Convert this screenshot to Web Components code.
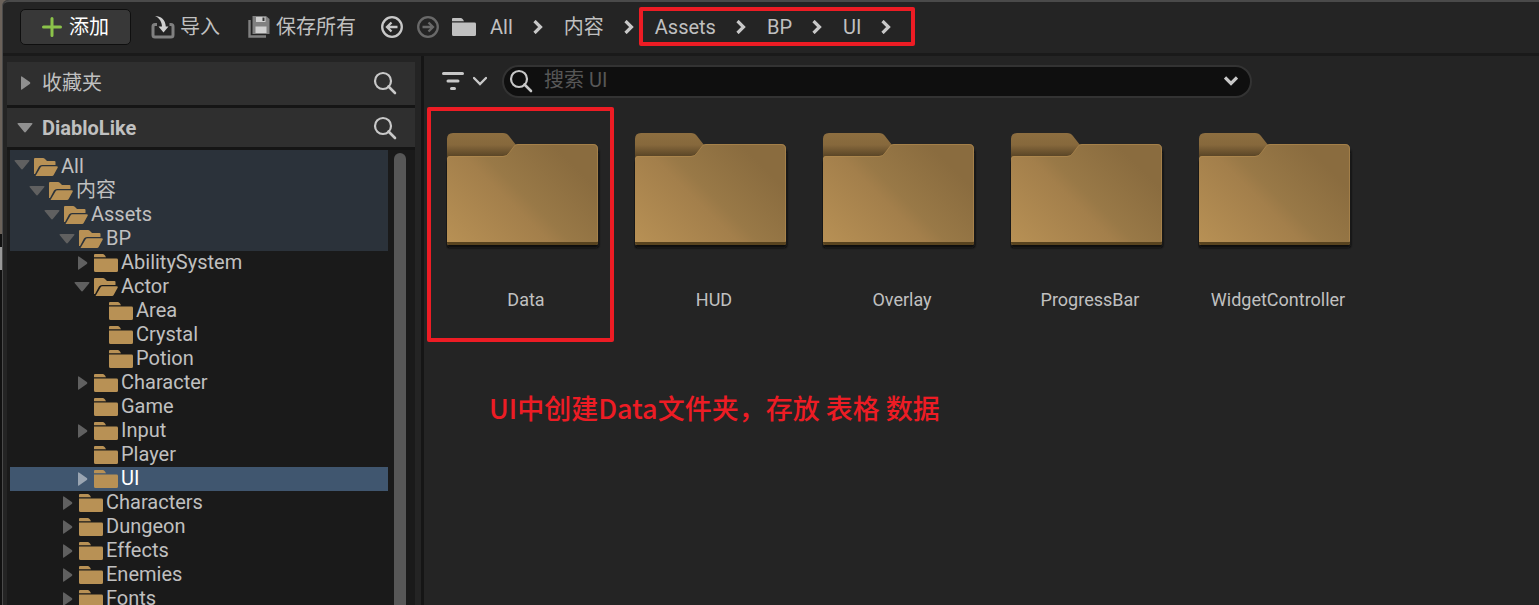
<!DOCTYPE html>
<html lang="zh-CN">
<head>
<meta charset="utf-8">
<title>Content Browser</title>
<style>
  html, body { margin: 0; height: 100%; overflow: hidden; }
  body { background: #242424; color: #c0c0c0; font: 20px/24px Roboto, "Noto Sans CJK SC", sans-serif; }
</style>
</head>
<body>
<content-browser></content-browser>
<script>
const BASE = `<style>
  *, *::before, *::after { box-sizing: border-box; }
  button, a, input { font: inherit; color: inherit; background: none; border: 0; margin: 0; padding: 0; text-decoration: none; }
  button, a { cursor: pointer; }
  svg { display: block; flex: none; }
</style>`;

const ICONS = {
  plus: [20, 20, '<path d="M10 1.5V18.500M1.500 10H18.500" stroke="#8bc34a" stroke-width="3" stroke-linecap="round"/>'],
  import: [24, 24, '<path d="M6 9.500H4Q2 9.500 2 11.500V20Q2 22 4 22H20Q22 22 22 20V11.500Q22 9.500 20 9.500H18.500" fill="none" stroke="#808080" stroke-width="3"/><path d="M4 1C10 1 14.500 5 14.800 11.500H17.500L12.500 17.500L7.500 11.500H11C10.800 7 8.500 3 4 1Z" fill="#d0d0d0"/>'],
  save: [22, 22, '<path d="M1.500 4V20.500H18" fill="none" stroke="#808080" stroke-width="2.400"/><path d="M4.500 0H18L21.500 3V18H4.500Z" fill="#808080"/><path d="M8 1H17.500V6H8ZM7.500 10.500H18.500V17H7.500Z" fill="#d0d0d0"/><path d="M14.500 1.500H16.500V5H14.500Z" fill="#333"/>'],
  back: [22, 22, '<circle cx="11" cy="11" r="9.800" fill="none" stroke="#c8c8c8" stroke-width="2.300"/><path d="M16.500 11H6.500M10.500 6.500L6 11L10.500 15.500" fill="none" stroke="#c8c8c8" stroke-width="2.300"/>'],
  forward: [22, 22, '<circle cx="11" cy="11" r="9.800" fill="none" stroke="#696969" stroke-width="2.300"/><path d="M5.500 11H15.500M11.500 6.500L16 11L11.500 15.500" fill="none" stroke="#696969" stroke-width="2.300"/>'],
  folder: [24, 18, '<path d="M0 3.300V1Q0 0 1 0H9Q10 0 11 1.500L12 3.300ZM0 4.600H22.500Q24 4.600 24 6V16.500Q24 18 22.500 18H1.500Q0 18 0 16.500Z" fill="currentColor"/>'],
  open: [24, 18, '<path d="M0 16V1Q0 0 1 0H9Q10 0 11 1L13 3H20.500Q21.500 3 21.500 4V7H8Q6 7 5 8.500L1 16Z" fill="currentColor"/><path d="M1.500 18L6.500 9.500Q7 8.300 8.500 8.300H22.500Q24.500 8.300 23.500 10L19.800 16.800Q19.200 18 18 18Z" fill="currentColor"/>'],
  next: [10, 14, '<path d="M1.500 1L7.500 7L1.500 13" fill="none" stroke="#c8c8c8" stroke-width="3.200"/>'],
  right: [16, 14, '<path d="M4 1.500Q4 -.5 5.300 .8L12.800 6Q13.800 7 12.800 8L5.300 13.200Q4 14.500 4 12.500Z" fill="currentColor"/>'],
  down: [16, 10, '<path d="M1.500 0H14.500Q16.300 0 15 1.500L9 8.800Q8 10 7 8.800L1 1.500Q-.3 0 1.500 0Z" fill="currentColor"/>'],
  search: [24, 24, '<circle cx="10" cy="10" r="8" fill="none" stroke="#c8c8c8" stroke-width="2.200"/><path d="M15.500 15.500L22 22" stroke="#c8c8c8" stroke-width="2.600" stroke-linecap="round"/>'],
  filter: [22, 20, '<path d="M1.500 2.500H20.500M6 10H16M9.500 17.500H12.500" stroke="#c8c8c8" stroke-width="3" stroke-linecap="round"/>'],
  thin: [14, 10, '<path d="M1 2L7 8L13 2" fill="none" stroke="#c8c8c8" stroke-width="2.400" stroke-linecap="round"/>'],
  thick: [14, 10, '<path d="M1 1.500L7 7.500L13 1.500" fill="none" stroke="#c8c8c8" stroke-width="3.200"/>']
};
const icon = n => {
  const [w, h, body] = ICONS[n];
  return `<svg width="${w}" height="${h}" viewBox="0 0 ${w} ${h}" aria-hidden="true">${body}</svg>`;
};

function define(name, render) {
  customElements.define(name, class extends HTMLElement {
    constructor() {
      super();
      this.attachShadow({ mode: 'open' });
    }
    connectedCallback() {
      this.shadowRoot.innerHTML = BASE + render(this);
    }
  });
}

define('crumb-item', el => `<style>
  :host { display: flex; align-items: center; gap: 20px; }
</style><a href="#"><slot></slot></a>${icon('next')}`);

define('tool-bar', () => `<style>
  :host { display: flex; align-items: center; box-sizing: border-box; height: 56px; padding: 0 0 2px 17px; border-top: 2px solid #4a4a4a; border-bottom: 3px solid #1a1a1a; border-top-left-radius: 6px; background: #242424; }
  button { display: flex; align-items: center; flex: none; }
  .add { gap: 7px; height: 36px; width: 111px; justify-content: center; background: #383838; border: 1px solid #0f0f0f; border-radius: 5px; color: #fff; }
  .import { gap: 5px; margin-left: 20px; }
  .save { gap: 6px; margin-left: 28px; }
  .back { margin-left: 25px; }
  .forward { margin: 0 13px 0 14px; }
  nav { display: flex; align-items: center; gap: 21px; }
  .root { display: flex; align-items: center; gap: 14px; }
  .marked { position: relative; display: flex; gap: 21px; }
  .marked::after { content: ""; position: absolute; inset: -8px -24px -7px -16px; border: 4px solid #ed1c24; border-radius: 2px; pointer-events: none; }
</style>
<button class="add">${icon('plus')}<span>添加</span></button>
<button class="import">${icon('import')}<span>导入</span></button>
<button class="save">${icon('save')}<span>保存所有</span></button>
<button class="back" aria-label="后退">${icon('back')}</button>
<button class="forward" aria-label="前进">${icon('forward')}</button>
<nav><span class="root">${icon('folder')}<crumb-item>All</crumb-item></span><crumb-item>内容</crumb-item>
<span class="marked"><crumb-item>Assets</crumb-item><crumb-item>BP</crumb-item><crumb-item>UI</crumb-item></span></nav>`);

define('panel-header', el => `<style>
  :host { display: flex; align-items: center; justify-content: space-between; box-sizing: border-box; background: #2f2f2f; padding: 0 18px 0 10px; border-bottom: 3px solid #151515; }
  button { display: flex; align-items: center; gap: 9px; color: #c0c0c0; }
  svg { color: #909090; }
  :host([bold]) button { font-weight: 700; }
</style><button>${icon(el.hasAttribute('bold') ? 'down' : 'right')}<span><slot></slot></span></button><button aria-label="搜索">${icon('search')}</button>`);

define('tree-row', el => {
  const state = el.getAttribute('state');
  return `<style>
  :host { display: flex; align-items: center; height: 24px; gap: 4px; padding-left: ${4 + 15 * el.getAttribute('depth')}px; white-space: nowrap; }
  :host([ancestor]) { background: #2b323a; }
  :host([top]) { height: 29px; }
  :host([top]) .item { padding-top: 5px; }
  :host([selected]) { background: #40566f; color: #fff; }
  .arrow { display: flex; width: 16px; color: #606060; }
  :host([selected]) .arrow { color: #9aa5b2; }
  .item { display: flex; align-items: center; gap: 3px; height: 24px; }
  :host([top]) .item { height: 29px; }
  .item span { padding-bottom: 2px; }
  .item svg { color: #b89155; }
</style><span class="arrow">${state ? icon(state) : ''}</span><a class="item" href="#">${icon(state === 'down' ? 'open' : 'folder')}<span><slot></slot></span></a>`;
});

const ROWS = [
  ['All', 0, 'down', 'ancestor top'], ['内容', 1, 'down', 'ancestor'], ['Assets', 2, 'down', 'ancestor'], ['BP', 3, 'down', 'ancestor'],
  ['AbilitySystem', 4, 'right'], ['Actor', 4, 'down'], ['Area', 5, ''], ['Crystal', 5, ''], ['Potion', 5, ''],
  ['Character', 4, 'right'], ['Game', 4, ''], ['Input', 4, 'right'], ['Player', 4, ''], ['UI', 4, 'right', 'selected'],
  ['Characters', 3, 'right'], ['Dungeon', 3, 'right'], ['Effects', 3, 'right'], ['Enemies', 3, 'right'], ['Fonts', 3, 'right']
];

define('source-panel', () => `<style>
  :host { display: flex; flex-direction: column; width: 408px; flex: none; min-height: 0; padding-top: 6px; }
  .fav { height: 46px; padding-bottom: 2px; }
  .proj { height: 42px; }
  .tree { display: flex; flex: 1; min-height: 0; background: #1a1a1a; padding-left: 3px; gap: 6px; overflow: hidden; }
  .rows { width: 378px; }
  .bar { width: 12px; margin-top: 3px; background: #575757; border-radius: 6px 6px 0 0; }
</style>
<panel-header class="fav">收藏夹</panel-header><panel-header class="proj" bold>DiabloLike</panel-header>
<div class="tree"><div class="rows">${ROWS.map(([t, d, s, a]) => `<tree-row depth="${d}" state="${s}" ${a || ''}>${t}</tree-row>`).join('')}</div><div class="bar"></div></div>`);

define('search-bar', () => `<style>
  :host { display: flex; align-items: center; gap: 15px; padding: 9px 18px 0; }
  .filter { display: flex; align-items: center; gap: 9px; padding-bottom: 2px; }
  label { display: flex; align-items: center; flex: 1; max-width: 750px; height: 33px; padding: 0 12px 2px 5px; gap: 11px; background: #0f0f0f; border: 2px solid #333; border-radius: 17px; }
  input { flex: 1; min-width: 0; height: 28px; padding-bottom: 2px; outline: 0; }
  input::placeholder { color: #575757; opacity: 1; }
  label button { padding: 4px 0; }
</style><button class="filter" aria-label="筛选">${icon('filter')}${icon('thin')}</button>
<label>${icon('search')}<input type="text" placeholder="搜索 UI" aria-label="搜索 UI"><button aria-label="历史">${icon('thick')}</button></label>`);

define('folder-tile', () => `<style>
  :host { position: relative; display: block; box-sizing: border-box; height: 235px; padding: 24px 14px 0; font-size: 18px; text-align: center; }
  a { display: flex; flex-direction: column; align-items: center; gap: 37px; }
  :host([marked])::after { content: ""; position: absolute; inset: 0 6px 0 -5px; border: 4px solid #ed1c24; border-radius: 2px; pointer-events: none; }
</style><a href="#"><svg width="160" height="120" viewBox="0 0 160 120" aria-hidden="true">
<defs>
 <linearGradient id="f" gradientUnits="userSpaceOnUse" x1="13" y1="126" x2="139" y2="0"><stop offset="0" stop-color="#b89155"/><stop offset=".42" stop-color="#a37f4b"/><stop offset=".5" stop-color="#997947"/><stop offset=".82" stop-color="#8a6c3f"/><stop offset="1" stop-color="#8a6c3f"/></linearGradient>
 <linearGradient id="t" x1="0" y1="0" x2="0" y2="1"><stop offset="0" stop-color="#8d6e40"/><stop offset=".5" stop-color="#86683c"/><stop offset="1" stop-color="#574325"/></linearGradient>
 <filter id="s" x="-5%" y="-5%" width="115%" height="115%"><feGaussianBlur stdDeviation="1"/></filter>
</defs>
<path d="M1 30H148L153 18V114Q153 117 150 117H3Q1 117 1 114Z" fill="#080808" filter="url(#s)"/>
<path d="M1 26V8Q1 2 7 2H57Q61 2 63 5L70 14L62 26Z" fill="url(#t)"/>
<path d="M1 28Q1 25 4 25H57Q61 25 63 22L68 15Q69 13 72 13H147Q152 13 152 18V112Q152 114 150 114H3Q1 114 1 112Z" fill="url(#f)"/>
<path d="M1.500 28Q1.500 25.500 4 25.500H57Q61 25.500 63 22L68 15.500Q69 13.500 72 13.500H147Q151.500 13.500 151.500 18V110" fill="none" stroke="#b48c50" stroke-opacity=".6"/>
<path d="M1 111H152V112Q152 114 150 114H3Q1 114 1 112Z" fill="#58431f"/>
</svg><span><slot></slot></span></a>`);

define('asset-view', () => `<style>
  :host { display: flex; flex-direction: column; flex: 1; min-width: 0; border-left: 3px solid #151515; }
  .grid { display: grid; grid-template-columns: repeat(auto-fill, 188px); padding: 9px 0 0 8px; }
  p { margin: 49px 65px 0; color: #ed1c24; font: 500 27px/34px "Noto Sans CJK SC", sans-serif; }
</style><search-bar></search-bar>
<div class="grid"><folder-tile marked>Data</folder-tile><folder-tile>HUD</folder-tile><folder-tile>Overlay</folder-tile><folder-tile>ProgressBar</folder-tile><folder-tile>WidgetController</folder-tile></div>
<p>UI中创建Data文件夹，存放 表格 数据</p>`);

define('content-browser', () => `<style>
  :host { display: flex; height: 100vh; background: linear-gradient(#6b625a 0 234px, #111 234px 247px, #999 247px 270px, #111 270px); }
  .window { display: flex; flex-direction: column; flex: 1; min-width: 0; margin-left: 2px; background: #242424; border-left: 1px solid #4a4a4a; border-top-left-radius: 6px; }
  .main { display: flex; flex: 1; min-height: 0; gap: 6px; padding-left: 4px; }
  tool-bar { flex: none; }
</style><div class="window"><tool-bar></tool-bar><div class="main"><source-panel></source-panel><asset-view></asset-view></div></div>`);
</script>
</body>
</html>
